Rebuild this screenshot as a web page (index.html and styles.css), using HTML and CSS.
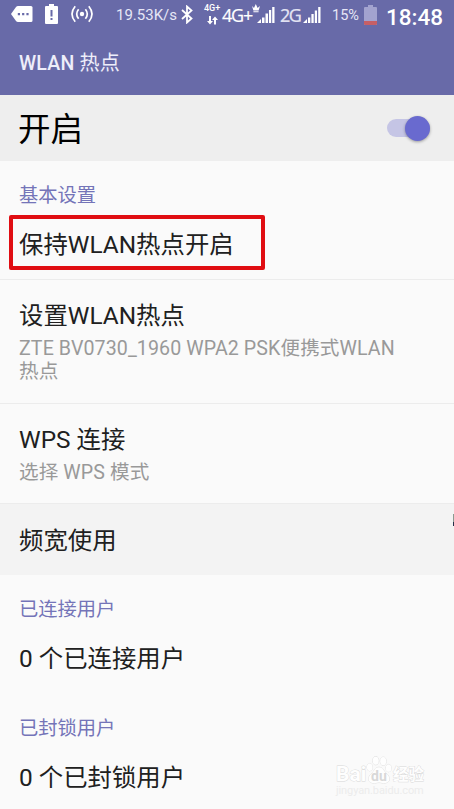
FILE: index.html
```
<!DOCTYPE html>
<html lang="zh-CN">
<head>
    <meta charset="UTF-8">
    <meta name="viewport" content="width=device-width, initial-scale=1.0">
    <title>WLAN 热点</title>
    <link rel="stylesheet" href="styles.css">
</head>
<body>

<header class="header">
    <div class="status-bar">
        <svg class="icon-message" width="22" height="16" viewBox="0 0 22 16">
            <path d="M7 0H20Q21.5 0 21.5 1.5V14.5Q21.5 16 20 16H7Q5.8 16 5 15L0 8L5 1Q5.8 0 7 0Z" fill="#fff"/>
            <path d="M6.8 7h2.2v2.2H6.8zM11.1 7h2.2v2.2h-2.2zM15.4 7h2.2v2.2h-2.2z" fill="#686aa8"/>
        </svg>
        <svg class="icon-alert" width="13" height="20" viewBox="0 0 13 20">
            <path d="M4 0h5v2h3q1 0 1 1v16q0 1-1 1H1q-1 0-1-1V3q0-1 1-1h3z" fill="#fff"/>
            <path d="M5.5 6h2v6.5h-2zM5.5 14h2v2h-2z" fill="#686aa8"/>
        </svg>
        <svg class="icon-hotspot" width="22" height="18" viewBox="0 0 22 18" fill="none" stroke="#fff" stroke-width="1.7">
            <circle cx="11" cy="9" r="2.2" fill="#fff" stroke="none"/>
            <path d="M7.6 4.2Q3.8 9 7.6 13.8M14.4 4.2Q18.2 9 14.4 13.8M4.2 1.2Q-2.2 9 4.2 16.8M17.8 1.2Q24.2 9 17.8 16.8"/>
        </svg>
        <span class="speed">19.53K/s</span>
        <svg class="icon-bluetooth" width="12" height="19" viewBox="0 0 12 19" fill="none" stroke="#fff" stroke-width="1.8">
            <path d="M1 5L10.5 13.5L6 17.5V1.5L10.5 5.5L1 14"/>
        </svg>
        <span class="network">
            <span>4G+</span>
            <svg width="11" height="9" viewBox="0 0 11 9" fill="#fff">
                <path d="M2 0h2v5h2L3 8.5L0 5h2zM7 8.5h2V4h2L8 .5L5 4h2z"/>
            </svg>
        </span>
        <span class="carrier">4G+</span>
        <svg class="icon-signal-crown" width="23" height="20" viewBox="0 0 23 20" fill="#fff">
            <path d="M0 2L2 4L3.8 0L5.6 4L8 2L6.6 6.5H1.4zM1.4 7.3h5.2v1H1.4z"/>
            <path d="M5 19L9 15V19zM10 13.5h2.5V19H10zM13.5 9.5H16V19h-2.5zM17 6h2.2v13H17zM20.2 3h2.3v16h-2.3z"/>
        </svg>
        <span class="carrier carrier-second">2G</span>
        <svg class="icon-signal" width="18" height="17" viewBox="0 0 18 17" fill="#fff">
            <path d="M0 16L4 12V16zM5 10.5h2.3V16H5zM8.4 7h2.3v9H8.4zM11.8 3.5H14V16h-2.2zM15.2 0h2.3v16h-2.3z"/>
        </svg>
        <span class="percent">15%</span>
        <svg class="icon-battery" width="13" height="20" viewBox="0 0 13 20">
            <path d="M4 0h5v2h3q1 0 1 1v16q0 1-1 1H1q-1 0-1-1V3q0-1 1-1h3z" fill="#a3a3cf"/>
            <path d="M0 16h13v3q0 1-1 1H1q-1 0-1-1z" fill="#c65f66"/>
        </svg>
        <span class="clock">18:48</span>
    </div>
    <h1 class="title">WLAN <span class="title-cjk">热点</span></h1>
</header>

<div class="switch-bar">
    <span class="switch-label">开启</span>
    <span class="toggle"><span class="toggle-thumb"></span></span>
</div>

<main class="settings">
    <h2 class="category">基本设置</h2>
    <div class="row row-keep">
        <div class="name">保持WLAN热点开启</div>
        <div class="highlight"></div>
    </div>
    <div class="row row-setup">
        <div class="name">设置WLAN热点</div>
        <div class="summary">ZTE BV0730_1960 WPA2 PSK便携式WLAN<br>热点</div>
    </div>
    <div class="row row-wps">
        <div class="name">WPS 连接</div>
        <div class="summary">选择 WPS 模式</div>
    </div>
    <div class="row row-band">
        <div class="name">频宽使用</div>
        <div class="edge"></div>
    </div>
    <h2 class="category category-users">已连接用户</h2>
    <div class="row row-users">
        <div class="name">0 个已连接用户</div>
    </div>
    <h2 class="category category-users">已封锁用户</h2>
    <div class="row row-users">
        <div class="name">0 个已封锁用户</div>
    </div>
</main>

<div class="watermark">
    <div class="brand">
        <span class="brand-bai">Bai</span>
        <span class="brand-paw">
            <svg width="26" height="30" viewBox="0 0 28 30" fill="#fefefe" stroke="#dedede" stroke-width="1">
                <ellipse cx="4" cy="12" rx="3" ry="4"/>
                <ellipse cx="10.5" cy="5" rx="3.2" ry="4.4"/>
                <ellipse cx="18.5" cy="5.5" rx="3.2" ry="4.4"/>
                <ellipse cx="24.3" cy="13" rx="3" ry="4"/>
                <path d="M14 12C10 12 9 16 6 19C2 22 1 28 7 29C10 29.5 12 28.5 14 28.5S18 29.5 21 29C27 28 26 22 22 19C19 16 18 12 14 12Z"/>
            </svg>
            <span class="brand-du">du</span>
        </span>
        <span class="brand-name">经验</span>
    </div>
    <div class="site">jingyan.baidu.com</div>
</div>

</body>
</html>
```
FILE: styles.css
```
* {
    box-sizing: border-box;
}

body {
    margin: 0;
    height: 809px;
    position: relative;
    overflow: hidden;
    background: #fafafa;
    color: #202020;
    font-family: Roboto, "Noto Sans CJK SC", sans-serif;
}

svg {
    display: block;
    flex: none;
}

/* Header */
.header {
    height: 95px;
    background: #686aa8;
    color: #fff;
}

.status-bar {
    display: flex;
    align-items: flex-start;
    height: 31px;
    line-height: 20px;
    white-space: nowrap;
}

.status-bar > span {
    flex: none;
}

.icon-message {
    margin: 6px 0 0 11px;
}

.icon-alert {
    margin: 4px 0 0 12px;
}

.icon-hotspot {
    margin: 5px 0 0 13px;
}

.speed {
    width: 61px;
    margin: 5px 0 0 23px;
    font-size: 15px;
    letter-spacing: 0;
    color: #e6e6f6;
}

.icon-bluetooth {
    margin: 5px 0 0 4px;
}

.network {
    width: 17px;
    margin: 4px 0 0 11px;
    font-size: 9px;
    font-weight: 500;
    line-height: 9px;
}

.network svg {
    margin: 3px 0 0 3px;
}

.carrier {
    width: 30px;
    margin: 5px 0 0 1px;
    font-family: "Open Sans", sans-serif;
    font-size: 18px;
    letter-spacing: -1.2px;
    -webkit-text-stroke: 0.2px #fff;
}

.icon-signal-crown {
    margin: 4px 0 0 0;
}

.carrier-second {
    width: 20px;
    margin-left: 5px;
    color: #e0e0f2;
    letter-spacing: -1.6px;
}

.icon-signal {
    margin: 7px 0 0 3px;
}

.percent {
    width: 28px;
    margin: 6px 0 0 11px;
    font-size: 14.5px;
    color: #e6e6f6;
}

.icon-battery {
    margin: 5px 0 0 4px;
}

.clock {
    margin: 7px 0 0 9px;
    font-size: 22.5px;
    font-weight: 500;
}

.title {
    margin: 0;
    padding: 17px 0 0 19px;
    font-size: 19.5px;
    font-weight: 500;
    line-height: 31px;
    letter-spacing: 0.2px;
    color: #eeeefa;
}

.title-cjk {
    font-size: 20px;
    font-weight: 400;
}

/* Switch */
.switch-bar {
    display: flex;
    align-items: center;
    justify-content: space-between;
    height: 66px;
    padding: 0 24px 0 18px;
    background: #eeeeee;
    color: #000;
    font-size: 32.5px;
    line-height: 64px;
}

.switch-label {
    padding-top: 3px;
}

.toggle {
    display: flex;
    align-items: center;
    justify-content: flex-end;
    width: 43px;
    height: 18px;
    border-radius: 9px;
    background: #c5c5e5;
}

.toggle-thumb {
    flex: none;
    width: 25px;
    height: 25px;
    border-radius: 50%;
    background: #696acf;
    box-shadow: 0 1px 3px rgba(0, 0, 0, 0.35);
}

/* Settings list */
.category {
    height: 55px;
    margin: 0;
    padding: 21px 19px 0;
    color: #7474b8;
    font-size: 19.3px;
    font-weight: 400;
    line-height: 28px;
}

.row {
    position: relative;
    padding: 0 19px;
    border-bottom: 1px solid #ececec;
}

.name {
    font-size: 24.4px;
    line-height: 36px;
    white-space: nowrap;
}

.summary {
    color: #999;
    font-size: 19.6px;
    line-height: 23px;
    letter-spacing: 0.1px;
    white-space: nowrap;
}

.row-keep {
    height: 64px;
    padding-top: 11px;
}

.highlight {
    position: absolute;
    top: -1px;
    left: 9px;
    width: 256px;
    height: 55px;
    border: 4px solid #e00d12;
    border-radius: 2px;
}

.row-setup {
    height: 124px;
    padding-top: 18px;
}

.row-setup .summary,
.row-wps .summary {
    padding-top: 3px;
}

.row-wps {
    height: 100px;
    padding-top: 18px;
}

.row-band {
    height: 71px;
    padding-top: 19px;
    background: #f3f3f3;
    border-bottom: none;
}

.edge {
    position: absolute;
    top: 10px;
    right: 0;
    width: 1px;
    height: 12px;
    background: linear-gradient(#8a9a90 65%, #26304a 65%);
}

.category-users {
    height: 59px;
}

.row-users {
    height: 60px;
    padding-top: 7px;
    border-bottom: none;
}

/* Watermark */
.watermark {
    position: absolute;
    left: 336px;
    top: 755px;
    width: 95px;
    color: #fefefe;
    -webkit-text-stroke: 0.8px #d8d8d8;
    paint-order: stroke fill;
}

.brand {
    display: flex;
    align-items: flex-end;
    height: 30px;
}

.brand-bai {
    width: 30px;
    font-size: 21px;
    font-weight: 700;
    line-height: 22px;
}

.brand-paw {
    position: relative;
    width: 27px;
}

.brand-du {
    position: absolute;
    left: 5px;
    top: 14px;
    font-size: 14px;
    font-weight: 700;
    line-height: 14px;
    color: #d8d8d8;
    -webkit-text-stroke: 0;
}

.brand-name {
    font-size: 15.5px;
    font-weight: 700;
    line-height: 20px;
}

.site {
    font-size: 11px;
    line-height: 12px;
    letter-spacing: -0.1px;
    color: #ececec;
    -webkit-text-stroke: 0;
}
```
